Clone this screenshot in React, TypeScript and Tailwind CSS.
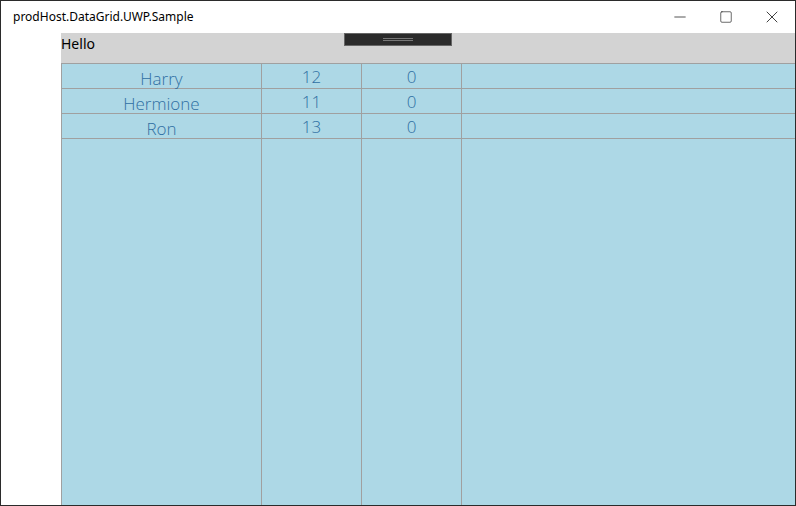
import { X, Minus, Square } from "lucide-react";

// Sample rows shown in the grid
const rows = [
    { name: "Harry", age: 12, score: 0 },
    { name: "Hermione", age: 11, score: 0 },
    { name: "Ron", age: 13, score: 0 },
];

const cols = "grid grid-cols-[200px_100px_100px_1fr]";

export default function App() {
    return (
        <div className="w-[796px] h-[506px] border border-[#2b2b2b] bg-white flex flex-col overflow-hidden font-['Open_Sans',sans-serif]">
            {/* Title bar */}
            <div className="h-[32px] flex items-center shrink-0">
                <span className="pl-[12px] text-[12px] text-black font-['Noto_Sans',sans-serif]">
                    prodHost.DataGrid.UWP.Sample
                </span>
                <div className="ml-auto flex h-full text-black">
                    <div className="w-[46px] flex items-center justify-center">
                        <Minus size={18} strokeWidth={0.9} />
                    </div>
                    <div className="w-[46px] flex items-center justify-center">
                        <Square size={14} strokeWidth={1} />
                    </div>
                    <div className="w-[46px] flex items-center justify-center">
                        <X size={20} strokeWidth={0.9} />
                    </div>
                </div>
            </div>

            {/* Content */}
            <div className="relative flex-1 flex min-h-0">
                <div className="w-[60px] shrink-0 bg-white" />
                <div className="flex-1 flex flex-col min-h-0">
                    <div className="h-[31px] bg-[#d3d3d3] border-b border-[#a0a0a0] shrink-0">
                        <span className="block pt-[2px] text-[14px] leading-[18px] text-black font-['Noto_Sans',sans-serif]">
                            Hello
                        </span>
                    </div>
                    <div className="bg-[#add8e6] flex-1 flex flex-col">
                        {rows.map((r) => (
                            <div key={r.name} className={`${cols} h-[25px] border-b border-[#a0a0a0]`}>
                                <div className="border-l border-[#a0a0a0] flex items-center justify-center text-[17px] font-light text-[#2f6fa3] pt-[1px]">
                                    {r.name}
                                </div>
                                <div className="border-l border-[#a0a0a0] flex items-center justify-center text-[17px] font-light text-[#2f6fa3] pb-[3px]">
                                    {r.age}
                                </div>
                                <div className="border-l border-[#a0a0a0] flex items-center justify-center text-[17px] font-light text-[#2f6fa3] pb-[3px]">
                                    {r.score}
                                </div>
                                <div className="border-l border-[#a0a0a0]" />
                            </div>
                        ))}
                        <div className={`${cols} flex-1`}>
                            <div className="border-l border-[#a0a0a0]" />
                            <div className="border-l border-[#a0a0a0]" />
                            <div className="border-l border-[#a0a0a0]" />
                            <div className="border-l border-[#a0a0a0]" />
                        </div>
                    </div>
                </div>

                {/* Drag handle */}
                <div className="absolute top-0 left-1/2 -translate-x-1/2 w-[108px] h-[13px] bg-[#2b2b2b] border border-[#666] flex flex-col items-center justify-center gap-[1px]">
                    <div className="w-[30px] h-px bg-[#777]" />
                    <div className="w-[30px] h-px bg-[#777]" />
                </div>
            </div>
        </div>
    );
}
